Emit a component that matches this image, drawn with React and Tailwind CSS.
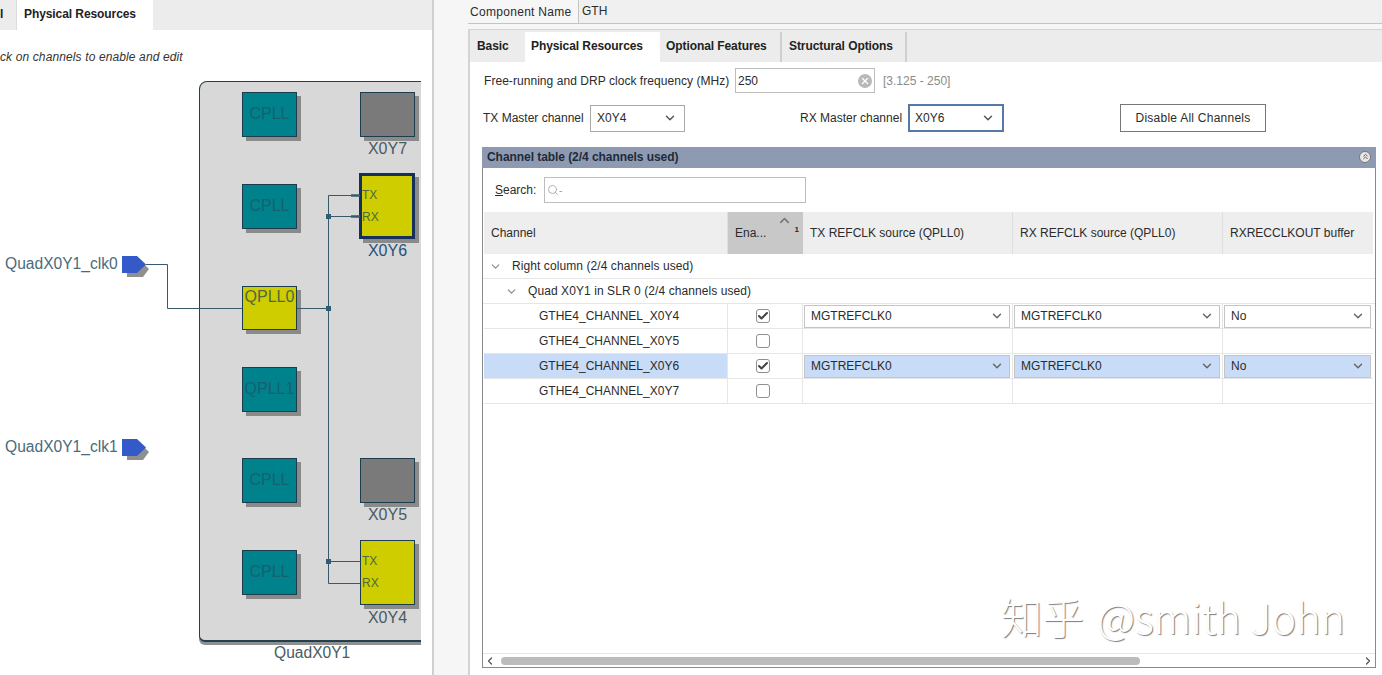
import { ChevronDown, ChevronUp, ChevronLeft, ChevronRight, ChevronsUp, Check, X, Search } from "lucide-react";

const font = "font-['Liberation_Sans',Arial,sans-serif]";

const teal = "bg-[#00828c] text-[#17606f] pt-[11px]";
const yellow = "bg-[#cfcd00] text-[#4d6a40]";

// y values are page coordinates, the canvas starts at y=70
const blocks = [
  { name: "CPLL", y: 92, h: 45, style: teal },
  { name: "CPLL", y: 184, h: 45, style: teal },
  { name: "QPLL0", y: 286, h: 44, style: yellow },
  { name: "QPLL1", y: 367, h: 45, style: teal },
  { name: "CPLL", y: 458, h: 45, style: teal },
  { name: "CPLL", y: 550, h: 45, style: teal },
];

const channels = [
  { label: "X0Y7", y: 92, h: 45, labelY: 69 },
  { label: "X0Y6", y: 173, h: 66, labelY: 171, pinY: 117, on: true, selected: true },
  { label: "X0Y5", y: 458, h: 45, labelY: 435 },
  { label: "X0Y4", y: 540, h: 65, labelY: 538, pinY: 483, on: true },
];

const rows = [
  { name: "GTHE4_CHANNEL_X0Y4", on: true },
  { name: "GTHE4_CHANNEL_X0Y5", on: false },
  { name: "GTHE4_CHANNEL_X0Y6", on: true, selected: true },
  { name: "GTHE4_CHANNEL_X0Y7", on: false },
];

function Port({ label, y }) {
  return (
    <>
      <span className="absolute left-[5px] text-[15.6px] leading-[20px] text-[#4a6b7b] whitespace-nowrap" style={{ top: y - 2 }}>
        {label}
      </span>
      <svg className="absolute left-[122px] w-[28px] h-[22px]" style={{ top: y }} viewBox="0 0 28 22">
        <path d="M5 5H19L27 13L21 21H5Z" fill="#8f8f8f" />
        <path d="M0 0H15L24 8.500L15 17H0Z" fill="#3459c8" />
      </svg>
    </>
  );
}

function Diagram() {
  return (
    <div className="relative h-[605px] w-[421px] overflow-hidden">
      <div className="absolute left-[199px] top-[11px] h-[561px] w-[240px] rounded-tl-[8px] rounded-bl-[6px] border border-[#24404f] border-b-[2px] bg-[#d8d8d8] shadow-[0_3px_0_#8f8f8f]" />
      <Port label="QuadX0Y1_clk0" y={186} />
      <Port label="QuadX0Y1_clk1" y={369} />

      {blocks.map((b) => (
        <div
          key={b.name + b.y}
          className={`absolute left-[242px] w-[55px] border border-[#1d3d4d] shadow-[4px_4px_0_#8a8a8a] flex justify-center text-[16px] leading-[20px] ${b.style}`}
          style={{ top: b.y - 70, height: b.h }}
        >
          {b.name}
        </div>
      ))}

      {channels.map((c) => (
        <div key={c.label}>
          <div
            className={`absolute shadow-[4px_4px_0_#8a8a8a] ${c.on ? "bg-[#cfcd00]" : "bg-[#7a7a7a]"} ${c.selected ? "left-[359px] w-[56px] border-[3px] border-[#15305a]" : "left-[360px] w-[55px] border border-[#1d3d4d]"}`}
            style={{ top: c.y - 70, height: c.h }}
          />
          {c.on && (
            <>
              <span className="absolute left-[362px] text-[12px] leading-[16px] text-[#4d6a40]" style={{ top: c.pinY }}>TX</span>
              <span className="absolute left-[362px] text-[12px] leading-[16px] text-[#4d6a40]" style={{ top: c.pinY + 22 }}>RX</span>
            </>
          )}
          <span
            className={`absolute left-[360px] w-[55px] text-center text-[16px] leading-[20px] ${c.selected ? "text-[#28507a]" : "text-[#4a5a62]"}`}
            style={{ top: c.labelY }}
          >
            {c.label}
          </span>
        </div>
      ))}

      <svg className="absolute inset-0 w-full h-full" viewBox="0 0 421 605" fill="none">
        <g stroke="#37596a" strokeWidth="1">
          <path d="M146 194.500H167.500V238.500H242" />
          <path d="M297 238.500H328.500" />
          <path d="M360 125.500H328.500V513.500H360" />
          <path d="M328.500 146.500H360" />
          <path d="M328.500 491.500H360" />
        </g>
        <path d="M351 125.500H360M351 146.500H360" stroke="#37596a" strokeWidth="2.500" />
        <g fill="#2f5c70">
          <rect x="326" y="144" width="5" height="5" />
          <rect x="326" y="236" width="5" height="5" />
          <rect x="326" y="489" width="5" height="5" />
        </g>
      </svg>

      <span className="absolute left-[274px] top-[573px] text-[15.6px] leading-[20px] text-[#4a5a62]">QuadX0Y1</span>
    </div>
  );
}

function LeftPanel() {
  return (
    <div className="w-[432px] h-full shrink-0 bg-white overflow-hidden">
      <div className="flex h-[30px] bg-[#ececec] text-[12px] font-bold leading-[28px] tracking-[-0.08px] text-[#222]">
        <div className="w-[17px] border-r border-[#dcdcdc] overflow-hidden">l</div>
        <div className="w-[136px] bg-white pl-[7px]">Physical Resources</div>
      </div>
      <p className="h-[21px] mt-[19px] text-[12px] italic leading-[16px] tracking-[0.12px] text-[#333] whitespace-nowrap">
        ck on channels to enable and edit
      </p>
      <Diagram />
    </div>
  );
}

function Select({ value, className }) {
  return (
    <div className={`flex items-center justify-between bg-white pr-[7px] ${className}`}>
      <span>{value}</span>
      <ChevronDown size={14} strokeWidth={2.500} className="text-[#555]" />
    </div>
  );
}

function CellSelect({ value, selected, width }) {
  return (
    <div className={`mx-[1px] h-[23px] flex items-center justify-between border border-[#c4c4c4] pl-[6px] pr-[5px] ${selected ? "bg-[#c8dcf8]" : "bg-white"} ${width}`}>
      <span>{value}</span>
      <ChevronDown size={14} strokeWidth={2.500} className="text-[#666]" />
    </div>
  );
}

function Checkbox({ on }) {
  return (
    <div className="w-[14px] h-[14px] rounded-[3px] border border-[#8f8f8f] bg-white flex items-center justify-center">
      {on && <Check size={12} strokeWidth={4} className="text-[#444]" />}
    </div>
  );
}

function GroupRow({ label, indent }) {
  return (
    <div className="h-[25px] flex items-center border-b border-[#e6e6e6] tracking-[0.08px]" style={{ paddingLeft: indent }}>
      <ChevronDown size={13} className="text-[#888] mr-[10px]" />
      <span>{label}</span>
    </div>
  );
}

function ChannelTable() {
  return (
    <div className="mt-[15px] ml-[12px] w-[894px] h-[521px] border border-[#8a8a8a] border-t-0 flex flex-col">
      <div className="h-[21px] -mx-[1px] bg-[#8e9ab2] flex items-center justify-between pl-[5px] pr-[5px] pb-[2px] font-bold tracking-[-0.06px] text-[#1f2a38]">
        <span>Channel table (2/4 channels used)</span>
        <div className="w-[12px] h-[12px] rounded-full bg-[#e8e8e8] border border-[#777] flex items-center justify-center">
          <ChevronsUp size={9} strokeWidth={2.500} className="text-[#555]" />
        </div>
      </div>

      <div className="flex items-center h-[26px] mt-[9px] ml-[12px]">
        <span className="w-[49px]"><u>S</u>earch:</span>
        <div className="w-[262px] h-full border border-[#bdbdbd] flex items-center pl-[2px] text-[#999]">
          <Search size={12} strokeWidth={1.500} />
          <span className="text-[10px]">-</span>
        </div>
      </div>

      <div className="flex h-[42px] mt-[9px] ml-[1px] w-[889px] bg-[#eeeeee] items-center">
        <div className="w-[244px] h-full flex items-center pl-[7px] border-r border-[#dedede]">Channel</div>
        <div className="relative w-[75px] h-full flex items-center pl-[7px] bg-[#c8c8c8]">
          Ena...
          <ChevronUp size={15} strokeWidth={2.500} className="absolute left-[49px] top-[1px] text-[#777]" />
          <span className="absolute right-[4px] top-[12px] text-[8px] font-bold">1</span>
        </div>
        <div className="w-[210px] h-full flex items-center pl-[7px] border-r border-[#dedede]">TX REFCLK source (QPLL0)</div>
        <div className="w-[210px] h-full flex items-center pl-[7px] border-r border-[#dedede]">RX REFCLK source (QPLL0)</div>
        <div className="w-[150px] h-full flex items-center pl-[7px]">RXRECCLKOUT buffer</div>
      </div>

      <GroupRow label="Right column (2/4 channels used)" indent={6} />
      <GroupRow label="Quad X0Y1 in SLR 0 (2/4 channels used)" indent={22} />

      {rows.map((r) => (
        <div key={r.name} className="h-[25px] flex items-center border-b border-[#e6e6e6] ml-[1px] w-[889px]">
          <div className={`w-[244px] h-full flex items-center pl-[55px] border-r border-[#e6e6e6] ${r.selected ? "bg-[#c8dcf8]" : ""}`}>{r.name}</div>
          <div className="w-[75px] h-full flex items-center justify-center pr-[4px] border-r border-[#e6e6e6]">
            <Checkbox on={r.on} />
          </div>
          <div className="w-[210px] h-full flex items-center border-r border-[#e6e6e6]">
            {r.on && <CellSelect value="MGTREFCLK0" selected={r.selected} width="w-[206px]" />}
          </div>
          <div className="w-[210px] h-full flex items-center border-r border-[#e6e6e6]">
            {r.on && <CellSelect value="MGTREFCLK0" selected={r.selected} width="w-[206px]" />}
          </div>
          <div className="w-[150px] h-full flex items-center">
            {r.on && <CellSelect value="No" selected={r.selected} width="w-[147px]" />}
          </div>
        </div>
      ))}

      <div className="relative flex-1">
        <span className="absolute left-[518px] top-[190px] text-[41.5px] leading-[44px] font-light text-white [text-shadow:1px_1px_1px_#7d7d7d] font-['Noto_Sans_CJK_SC','Noto_Sans',sans-serif] whitespace-nowrap">
          <span className="mr-[4px]">知乎</span> @smith John
        </span>
      </div>

      <div className="h-[14px] border-t border-[#e6e6e6] flex items-center justify-between text-[#555] px-[1px]">
        <ChevronLeft size={12} strokeWidth={2.500} />
        <div className="flex-1 ml-[5px] mr-[222px] h-[8px] rounded-full bg-[#bcbcbc]" />
        <ChevronRight size={12} strokeWidth={2.500} />
      </div>
    </div>
  );
}

function RightPanel() {
  return (
    <div className="flex-1 h-full border-l-[2px] border-[#d0d0d0] bg-[#f6f6f6] pl-[34px] overflow-hidden">
      <div className="flex items-center h-[24px] border-b border-[#c4c4c4]">
        <span className="w-[110px] shrink-0 pl-[2px] tracking-[0.3px]">Component Name</span>
        <div className="h-full flex-1 border-l border-[#c4c4c4] pl-[3px] leading-[22px] bg-[#f0f0f0]">GTH</div>
      </div>

      <div className="mt-[5px] h-[646px] border-t border-l-[2px] border-[#d4d4d4] flex flex-col">
        <div className="flex h-[32px] pt-[2px] bg-[#ececec] font-bold leading-[28px] tracking-[-0.08px] text-[#222] shrink-0">
          <div className="w-[55px] pl-[7px]">Basic</div>
          <div className="w-[135px] bg-white pl-[6px]">Physical Resources</div>
          <div className="w-[122px] pl-[6px] border-r-[2px] border-[#cfcfcf]">Optional Features</div>
          <div className="w-[125px] pl-[7px] border-r-[2px] border-[#cfcfcf]">Structural Options</div>
        </div>

        <div className="flex-1 bg-white">
          <div className="flex items-center h-[25px] mt-[6px] ml-[14px]">
            <span className="w-[251px] tracking-[0.05px]">Free-running and DRP clock frequency (MHz)</span>
            <div className="w-[140px] h-full border border-[#bdbdbd] flex items-center justify-between pl-[2px] pr-[2px]">
              <span>250</span>
              <div className="w-[14px] h-[14px] rounded-full bg-[#b9b9b9] flex items-center justify-center">
                <X size={10} strokeWidth={3} className="text-white" />
              </div>
            </div>
            <span className="ml-[8px] text-[#8a8a8a]">[3.125 - 250]</span>
          </div>

          <div className="flex items-center h-[28px] mt-[11px] ml-[13px]">
            <span className="w-[107px]">TX Master channel</span>
            <Select value="X0Y4" className="w-[95px] h-[27px] border border-[#a9a9a9] pl-[6px]" />
            <span className="ml-[115px] w-[108px]">RX Master channel</span>
            <Select value="X0Y6" className="w-[96px] h-[28px] border-[2px] border-[#5579a8] pl-[5px]" />
            <button className="ml-[116px] w-[146px] h-[28px] border border-[#777] bg-white tracking-[0.25px]">Disable All Channels</button>
          </div>

          <ChannelTable />
        </div>
      </div>
    </div>
  );
}

export default function App() {
  return (
    <div className={`flex w-[1382px] h-[675px] overflow-hidden bg-white text-[12px] text-[#2b2b2b] ${font}`}>
      <LeftPanel />
      <RightPanel />
    </div>
  );
}
